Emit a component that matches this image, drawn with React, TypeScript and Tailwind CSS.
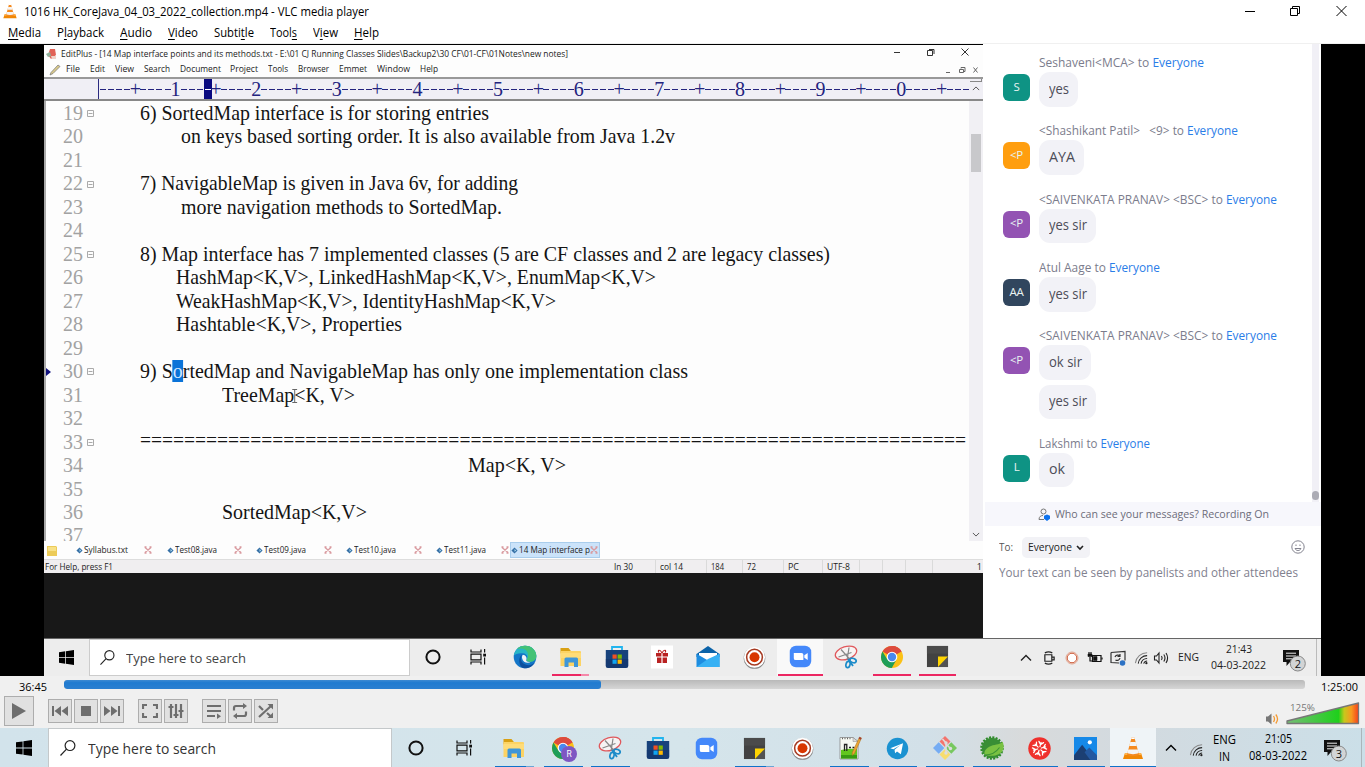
import React, { useLayoutEffect, useRef, useState } from "react";

type Kids = { children?: React.ReactNode };

/* Text condensed or widened horizontally so that it fills `w` pixels. */
function Fit({ w, className = "", children }: Kids & { w: number; className?: string }) {
  const ref = useRef<HTMLSpanElement>(null);
  const [scale, setScale] = useState(1);
  useLayoutEffect(() => {
    const el = ref.current;
    if (!el) return;
    el.style.transform = "none";
    const value = w / Math.max(1, el.getBoundingClientRect().width);
    el.style.transform = `scaleX(${value})`;
    setScale(value);
  }, [w]);
  return (
    <span className={`inline-flex shrink-0 ${className}`} style={{ width: w }}>
      <span ref={ref} className="inline-block shrink-0 origin-left whitespace-pre" style={{ transform: `scaleX(${scale})` }}>
        {children}
      </span>
    </span>
  );
}

/* ---------- icons ---------- */

const Cone = ({ className = "" }) => (
  <svg viewBox="0 0 24 24" className={className}>
    <path d="M4 17h16l2 6H2z" fill="#f08705" />
    <path d="M4 17h16l.6 2H3.4z" fill="#ffb14a" />
    <path d="M10.6 1.5h2.8L18 18.5c-2 2-10 2-12 0z" fill="#f58a1f" />
    <path d="M9.3 6h5.4l1.1 4H8.2zM7.3 13.500h9.400l1 3.500c-3 1.500-8.400 1.500-11.400 0z" fill="#f4f4f4" />
    <path d="M10.600 1.500h2.800l.4 1.500h-3.600z" fill="#fff" />
  </svg>
);

const WinLogo = ({ className = "" }) => (
  <svg viewBox="0 0 16 16" className={className}>
    <path d="M0 2.300 6.600 1.400V7.600H0zM7.400 1.300 16 0V7.600H7.400zM0 8.400H6.600V14.600L0 13.700zM7.400 8.400H16V16L7.400 14.700z" />
  </svg>
);

const Magnifier = ({ className = "" }) => (
  <svg viewBox="0 0 16 16" className={className} fill="none" stroke="#222" strokeWidth="1.2">
    <circle cx="10" cy="5.600" r="4.900" />
    <path d="M6.500 9.200.5 15.500" />
  </svg>
);

const Ring = () => (
  <svg viewBox="0 0 16 16" className="size-4">
    <circle cx="8" cy="8" r="6.600" fill="none" stroke="#111" strokeWidth="2" />
  </svg>
);

const TaskView = () => (
  <svg viewBox="0 0 17 16" className="h-4 w-[17px]" fill="none" stroke="#111" strokeWidth="1.200">
    <path d="M1 .5V3H11V.5M1 15.500V13H11V15.500M1 5.200H11V10.800H1zM14.600 0v3.500M14.600 8.500V15.500" />
    <path d="M13.200 4.700h2.800v2.800h-2.800z" fill="#111" stroke="none" />
  </svg>
);

const Folder = () => (
  <svg viewBox="0 0 24 24" className="size-6">
    <path d="M1.500 3h8l2 2.500v3h-10z" fill="#d9a013" />
    <path d="M1.500 6h19.500q1 0 1 1v14h-20.500z" fill="#fcd364" />
    <path d="M1.500 8h20.500v5h-20.500z" fill="#ffdc78" />
    <path d="M5.500 22v-8q0-1.500 1.500-1.500h10.500q1.500 0 1.500 1.500v8h-4v-4.500h-5.500V22z" fill="#3f96d8" />
  </svg>
);

const Store = () => (
  <svg viewBox="0 0 24 24" className="size-6">
    <path d="M7 6V2h10v4" fill="none" stroke="#21b4ee" strokeWidth="1.800" />
    <path d="M.8 5h22.400v15.500q0 2.500-2.500 2.500H3.300q-2.500 0-2.500-2.500z" fill="#17427c" />
    <path d="M.8 14h22.400v6.500q0 2.500-2.500 2.500H3.300q-2.500 0-2.500-2.500z" fill="#12336a" opacity=".6" />
    <path d="M7.500 9.500h4.200v4.200H7.500z" fill="#f25022" />
    <path d="M12.600 9.500h4.200v4.200h-4.200z" fill="#7fba00" />
    <path d="M7.500 14.600h4.200v4.200H7.500z" fill="#12a5f0" />
    <path d="M12.600 14.600h4.200v4.200h-4.200z" fill="#ffb901" />
  </svg>
);

const Zoom = () => (
  <svg viewBox="0 0 24 24" className="size-[23px]">
    <rect x=".8" y=".8" width="22.400" height="22.400" rx="6.500" fill="#4488fa" />
    <path d="M5 8.300h8q2 0 2 2v5.400H7q-2 0-2-2zM16 10.800l3.500-2.500v7.400L16 13.200z" fill="#fff" />
  </svg>
);

const Chrome = ({ badge = false }) => (
  <svg viewBox="0 0 24 24" className="size-6 overflow-visible">
    <circle cx="12" cy="12" r="11" fill="#fbc116" />
    <path d="M12 12 2.470 6.500A11 11 0 0 1 21.530 6.500z" fill="#dd4b3e" />
    <path d="M12 12 12 6.500H21.530A11 11 0 0 0 12 1z" fill="#dd4b3e" />
    <path d="M2.470 6.500A11 11 0 0 0 11.800 23L16.500 14.500 12 12 7.300 14.600z" fill="#1e9e58" />
    <circle cx="12" cy="12" r="5.300" fill="#fff" />
    <circle cx="12" cy="12" r="4.200" fill="#4a88ef" />
    {badge && (
      <>
        <circle cx="18" cy="18" r="8" fill="#7e57c2" />
        <text x="18" y="21" textAnchor="middle" fontSize="8.500" fill="#fff" fontFamily="Roboto, sans-serif">R</text>
      </>
    )}
  </svg>
);

const Snip = () => (
  <svg viewBox="0 0 24 24" className="size-6" fill="none">
    <ellipse cx="12" cy="8" rx="11" ry="6.300" transform="rotate(-17 12 8)" fill="#f7f3f3" stroke="#e0585c" strokeWidth="1.300" />
    <path d="m7 4.500 9.500 10.500M15 2.500l-1.800 12M4.500 12l13-4.500" stroke="#888" strokeWidth="1.200" />
    <ellipse cx="19" cy="15.500" rx="3.300" ry="2.100" transform="rotate(20 19 15.500)" stroke="#1c8bc9" strokeWidth="1.700" />
    <ellipse cx="14" cy="19.500" rx="2" ry="3.200" transform="rotate(15 14 19.500)" stroke="#1c8bc9" strokeWidth="1.700" />
    <path d="m14 14 5 7" stroke="#1c8bc9" strokeWidth="1.800" />
  </svg>
);

const Sticky = () => (
  <svg viewBox="0 0 24 24" className="size-[23px]">
    <path d="M1 1h22v22H1z" fill="#424242" />
    <path d="M1 1h22v8H1z" fill="#4b4b4b" />
    <path d="M12.500 12H23L12.500 23z" fill="#ffd400" />
    <path d="M23 12 12.500 23H23z" fill="#eee" opacity=".1" />
  </svg>
);

const Recorder = () => (
  <svg viewBox="0 0 24 24" className="size-[23px]">
    <circle cx="12" cy="12.500" r="11.300" fill="#888" />
    <circle cx="12" cy="11.700" r="11" fill="#fff" />
    <circle cx="12" cy="11.700" r="8.200" fill="none" stroke="#a63a22" strokeWidth="1.600" />
    <circle cx="12" cy="11.700" r="5.200" fill="#d83600" />
  </svg>
);

const Edge = () => (
  <svg viewBox="0 0 24 24" className="size-6">
    <circle cx="12" cy="12" r="11.300" fill="#1476c8" />
    <path d="M.9 10.500C2 4 7 .8 12 .8c7 0 11.300 5 11.300 10 0 4-3 6-6.500 6-2 0-3.800-.7-3.200-2 1.700-2.200.7-6-3.600-6.500C6 7.700 2 9 .9 10.500z" fill="#28b5c6" />
    <path d="M12 .8c7 0 11.300 5 11.300 10 0 4-3 6-6.500 6-2 0-3.800-.7-3.200-2 3-4 1-8.800-1.500-10.300C9 3 6 3.600 4 4 6.200 2 9 .8 12 .8z" fill="#43c276" />
    <path d="M10 9c-4 3-2.500 10 4 11 3 .5 5.500-.5 7.500-2.200C18.500 23 13.500 24 10 23 5.500 21 4.500 11.500 10 9z" fill="#0c4f9e" />
    <path d="M9.800 9.700c2.600.1 4.500 2.600 3.500 5-.7 1.600 1.500 2.700 4.500 2.100-2.500 2-8 1-8.700-3.500-.2-1.500 0-2.700.7-3.600z" fill="#f0f4f6" />
  </svg>
);

const Gift = () => (
  <svg viewBox="0 0 24 24" className="size-6">
    <path d="M1 .5h22v23H1z" fill="#fff" />
    <path d="M6 8h5.400v3.500H6zM12.600 8H18v3.500h-5.400zM7 12.500h4.400v5.500H7zM12.600 12.500H17v5.500h-4.400z" fill="#b92222" />
    <path d="M12 8C10 4 7 5 9 7.500M12 8c2-4 5-3 3-.5" fill="none" stroke="#b92222" strokeWidth="1.100" />
  </svg>
);

const Mail = () => (
  <svg viewBox="0 0 24 24" className="size-6">
    <path d="M.5 9 12 1l11.500 8v3H.5z" fill="#0b63a9" />
    <path d="M3 8h18v8H3z" fill="#fff" />
    <path d="M.5 8.800 12 15.500l11.500-6.700v13.200H.5z" fill="#1e8de0" />
    <path d="M.5 22 12 14l11.500-5.200v13.200z" fill="#37b1f4" />
  </svg>
);

const NotepadPP = () => (
  <svg viewBox="0 0 24 24" className="size-6">
    <path d="M2 1.500h13l5 4V23H2z" fill="#f6f8f2" stroke="#888" strokeWidth=".8" />
    <path d="M15 1.500v4h5z" fill="#ddd" stroke="#888" strokeWidth=".5" />
    <path d="M3 14q9-2 16-1v9.500H3z" fill="#62c61f" />
    <path d="M3 19h16v3.500H3z" fill="#379a12" />
    <path d="M4 2.500h10" stroke="#666" strokeDasharray="1 1.500" strokeWidth="1.500" />
    <path d="M6.500 15V8.500h2.300V15M11 11.500h2M14.500 11.500h2" stroke="#222" strokeWidth="1.300" fill="none" />
    <path d="m21.500 1 2 1-7 15.500-2.500 2 .4-3.300z" fill="#eba532" stroke="#a56a1c" strokeWidth=".5" />
    <path d="m21.500 1 2 1-.8 1.800-2-1z" fill="#a03b3b" />
  </svg>
);

const Telegram = () => (
  <svg viewBox="0 0 24 24" className="size-[23px]">
    <circle cx="12" cy="12" r="11.200" fill="#1b92d1" />
    <path d="m4.500 11.700 13.300-5.200-2.300 11.500-4-3-2 2-.6-3.700 6.200-5-7.400 4.500z" fill="#fff" />
  </svg>
);

const GitGui = () => (
  <svg viewBox="0 0 24 24" className="size-6">
    <path d="m12 0 5.500 5.500L12 11 6.500 5.500z" fill="#f4746d" />
    <path d="M5.700 6.300 11.300 12l-5.600 5.700L0 12z" fill="#75acf3" />
    <path d="M18.300 6.300 24 12l-5.700 5.700-5.600-5.700z" fill="#78c860" />
    <path d="m12 13 5.500 5.500L12 24l-5.500-5.500z" fill="#f7dd6d" />
    <path d="M9.500 3 13 7v10M13 8l4 4" stroke="#ddd" strokeWidth="1.600" fill="none" />
    <circle cx="13" cy="7" r="1.700" fill="#ddd" />
    <circle cx="17.500" cy="12.500" r="1.700" fill="#ddd" />
    <circle cx="13" cy="17" r="1.700" fill="#ddd" />
  </svg>
);

const Spring = () => (
  <svg viewBox="0 0 24 24" className="size-6">
    <circle cx="12" cy="12" r="10.500" fill="none" stroke="#2e8a2a" strokeWidth="2.500" strokeDasharray="2 1.300" />
    <circle cx="12" cy="12" r="10.300" fill="#388e35" />
    <path d="M22.500 5.500C21 8.500 16 8 11 10c-5 2-7 5-6.500 8.500C10 21 22 20.500 23.500 12c.3-2.500 0-4.500-1-6.500z" fill="#79c142" />
    <path d="M5 19c6 0 11-2.500 14.500-7.500" stroke="#3b9436" strokeWidth="1.100" fill="none" />
  </svg>
);

const RedHub = () => (
  <svg viewBox="0 0 24 24" className="size-[23px]">
    <circle cx="12" cy="12" r="11.700" fill="#ef302c" />
    {[0, 60, 120, 180, 240, 300].map((a) => (
      <path key={a} transform={`rotate(${a + 15} 12 12)`} d="M12 10V5.500M9.500 5l2.500 2.700L14.500 5" fill="none" stroke="#fff" strokeWidth="1.300" strokeLinecap="round" />
    ))}
  </svg>
);

const Photos = () => (
  <svg viewBox="0 0 24 24" className="size-[23px]">
    <path d="M0 0h24v24H0z" fill="#1689e8" />
    <path d="M0 19 8.500 8 21 24H0z" fill="#1c3f73" />
    <path d="m11 16 5-5 8 8v5h-7z" fill="#2458a0" />
    <circle cx="16.500" cy="5.500" r="2.200" fill="#fff" />
  </svg>
);

const Wifi = () => (
  <svg viewBox="0 0 16 16" className="size-[15px]" fill="none" strokeWidth="1.100">
    <path d="M1.500 14A12.500 12.500 0 0 1 14 3" stroke="#888" />
    <path d="M4.500 14.500A9.500 9.500 0 0 1 14 6M7.500 14.500A6.500 6.500 0 0 1 14 9" stroke="#222" />
    <path d="M10.300 14.500A4 4 0 0 1 14 11.800" stroke="#222" />
    <circle cx="13.200" cy="14" r="1.200" fill="#222" />
  </svg>
);

const Chevron = ({ down = false, className = "" }) => (
  <svg viewBox="0 0 12 8" className={className} fill="none" stroke="currentColor" strokeWidth="1.400">
    <path d={down ? "M1 1.500 6 6.500 11 1.500" : "M1 6.500 6 1.500 11 6.500"} />
  </svg>
);

const Notice = ({ n }: { n: number }) => (
  <svg viewBox="0 0 24 24" className="size-6 overflow-visible">
    <path d="M1 2h16v12H8l-3.500 4v-4H1z" fill="#111" />
    <path d="M4 5.200h10M4 8h10M4 10.800h7" stroke="#eee" strokeWidth="1" />
    <circle cx="15.800" cy="15.500" r="7.500" fill="#d2d4d5" stroke="#888" strokeWidth="1" />
    <text x="15.800" y="19.500" textAnchor="middle" fontSize="11" fill="#111" fontFamily="Open Sans, sans-serif">{n}</text>
  </svg>
);

/* ---------- VLC window ---------- */

const vlcMenus: [string, string, string, number][] = [
  ["", "M", "edia", 33], ["P", "l", "ayback", 47], ["", "A", "udio", 32], ["", "V", "ideo", 30],
  ["Subti", "t", "le", 40], ["Tool", "s", "", 27], ["V", "i", "ew", 25], ["", "H", "elp", 25],
];

function VlcHeader() {
  return (
    <header className="flex h-11 shrink-0 flex-col border-b border-[#f0f0f0] bg-white text-[12px] text-black">
      <div className="flex h-6 items-center">
        <Cone className="mb-[2px] ml-[2px] size-4" />
        <Fit w={345} className="ml-[6px]">1016 HK_CoreJava_04_03_2022_collection.mp4 - VLC media player</Fit>
        <svg viewBox="0 0 104 12" className="mr-[17px] mb-[2px] ml-auto h-3 w-[104px]" fill="none" stroke="#000">
          <path d="M1 6.500h10M46.500 3.500h7v7h-7zM48.500 3.500v-2h7v7h-2M92.500 1l10 10M102.500 1l-10 10" />
        </svg>
      </div>
      <nav className="flex h-5 items-center gap-4 pl-2">
        {vlcMenus.map(([a, b, c, w]) => (
          <Fit key={a + b + c} w={w}>{a}<u className="underline-offset-2">{b}</u>{c}</Fit>
        ))}
      </nav>
    </header>
  );
}

/* ---------- editor ---------- */

const editMenus: [string, number][] = [
  ["File", 14], ["Edit", 15], ["View", 19], ["Search", 26], ["Document", 41], ["Project", 28],
  ["Tools", 20], ["Browser", 31], ["Emmet", 28], ["Window", 33], ["Help", 18],
];

type Line = { n: number; fold?: boolean; x?: number; w?: number; text?: React.ReactNode; mark?: boolean; rule?: boolean };

const lines: Line[] = [
  { n: 19, fold: true, x: 0, w: 349, text: "6) SortedMap interface is for storing entries" },
  { n: 20, x: 41, w: 494, text: "on keys based sorting order. It is also available from Java 1.2v" },
  { n: 21 },
  { n: 22, fold: true, x: 0, w: 378, text: "7) NavigableMap is given in Java 6v, for adding" },
  { n: 23, x: 41, w: 321, text: "more navigation methods to SortedMap." },
  { n: 24 },
  { n: 25, fold: true, x: 0, w: 690, text: "8) Map interface has 7 implemented classes (5 are CF classes and 2 are legacy classes)" },
  { n: 26, x: 36, w: 480, text: "HashMap<K,V>, LinkedHashMap<K,V>, EnumMap<K,V>" },
  { n: 27, x: 36, w: 380, text: "WeakHashMap<K,V>, IdentityHashMap<K,V>" },
  { n: 28, x: 36, w: 226, text: "Hashtable<K,V>, Properties" },
  { n: 29 },
  { n: 30, fold: true, mark: true, x: 0, w: 548, text: <>9) S<span className="bg-[#0a73d8] text-[#cfe6ff]">o</span>rtedMap and NavigableMap has only one implementation class</> },
  { n: 31, x: 82, w: 133, text: <>TreeMap<span className="relative"><svg viewBox="0 0 7 14" className="absolute top-[5px] -left-[3px] h-[14px] w-[7px]" fill="none" stroke="#666"><path d="M1 .5h5M3.500.5v13M1 13.500h5" /></svg></span>{"<K, V>"}</> },
  { n: 32 },
  { n: 33, fold: true, rule: true, x: 0, w: 826, text: "=".repeat(75) },
  { n: 34, x: 328, w: 98, text: "Map<K, V>" },
  { n: 35 },
  { n: 36, x: 82, w: 145, text: "SortedMap<K,V>" },
  { n: 37 },
];

const rulerCells = Array.from({ length: 108 }, (_, i) =>
  i % 10 === 9 ? String(((i + 1) / 10) % 10) : i % 10 === 4 ? "+" : "-",
);

function Ruler() {
  return (
    <div className="flex h-6 shrink-0 border-y-2 border-t-[#999] border-b-[#888] bg-[#f0eff5]">
      <div className="w-[55px] shrink-0 border-r border-[#2a2a80]" />
      <div className="flex flex-1 items-center font-['Liberation_Serif',serif] text-[20px] leading-5 text-[#23237e]">
        {rulerCells.map((c, i) => (
          <span key={i} className={`flex h-5 w-[8.070px] shrink-0 justify-center ${i === 13 ? "bg-[#0a0a80] text-white" : ""}`}>
            {c === "-" ? <i className="mt-[10px] h-px w-[6px] bg-current" /> : c}
          </span>
        ))}
      </div>
      <div className="flex w-[14px] flex-col items-center gap-1">
        <i className="h-[3px] w-3 border-r border-b border-[#888]" />
        <Chevron className="h-[5px] w-2 text-[#444]" />
      </div>
    </div>
  );
}

const Gem = () => (
  <svg viewBox="0 0 8 8" className="size-[7px] shrink-0">
    <path d="m4 .5 3.500 3.500L4 7.500.5 4z" fill="#356fa5" />
    <path d="m4 2.300 2 1.700-2 1.500z" fill="#a9d8ee" />
  </svg>
);
const TabX = () => (
  <svg viewBox="0 0 8 8" className="size-[8px] shrink-0" fill="none" stroke="#d99a9f" strokeWidth="1.300">
    <path d="m1 1.500 6 5M7 1.500l-6 5M.5 1h2M5.500 1h2M.5 7h2M5.500 7h2" />
  </svg>
);

const fileTabs: [string, number][] = [
  ["Syllabus.txt", 44], ["Test08.java", 42], ["Test09.java", 42], ["Test10.java", 42], ["Test11.java", 42],
];

const statusCells: [string, number, string][] = [
  ["In 30", 19, "w-[46px]"], ["col 14", 23, "w-[51px]"], ["184", 13, "w-[36px]"], ["72", 9, "w-[41px]"],
  ["PC", 11, "w-[39px]"], ["UTF-8", 23, "w-[37px]"], ["", 0, "w-[23px]"], ["", 0, "w-[23px]"], ["", 0, "w-[27px]"],
];

function Indent({ x }: { x: number }) {
  return <span className="shrink-0" style={{ width: x }} />;
}

function Editor() {
  return (
    <section className="flex w-[939px] shrink-0 flex-col border-t border-black bg-[#181818]">
      <div className="flex h-[528px] flex-col bg-[#fdfdfd] text-[9.500px] text-[#222]">
        <div className="flex h-[17px] shrink-0 items-center">
          <svg viewBox="0 0 12 12" className="ml-[1px] size-3">
            <path d="M5 1h5l1 6-5 4-3-4z" fill="#e16257" />
            <path d="M1 6l4-2 1 4-3 1z" fill="#8fb09a" />
            <path d="M6 8h5v3H7z" fill="#efd2c8" />
          </svg>
          <Fit w={507} className="mt-[1px] ml-1">EditPlus - [14 Map interface points and its methods.txt - E:\01 CJ Running Classes Slides\Backup2\30 CF\01-CF\01Notes\new notes]</Fit>
          <svg viewBox="0 0 80 10" className="mr-[13px] mb-1 ml-auto h-[10px] w-20" fill="none" stroke="#333">
            <path d="M4 5.500h6M37.500 3.500h5v5h-5zM39 2.500h5V7M71.500 1.500l7 7M78.500 1.500l-7 7" />
          </svg>
        </div>
        <div className="flex h-[15px] shrink-0 items-center">
          <svg viewBox="0 0 12 12" className="mr-[5px] ml-[5px] size-3">
            <path d="M1 11 2 8.500 9 1l2 1.500L4 9.500z" fill="#d9c98a" stroke="#777" strokeWidth=".7" />
          </svg>
          <nav className="flex items-center gap-[9.900px]">
            {editMenus.map(([t, w]) => <Fit key={t} w={w}>{t}</Fit>)}
          </nav>
          <svg viewBox="0 0 36 8" className="mr-[2px] ml-auto h-2 w-9" fill="none" stroke="#666">
            <path d="M1 6.500h4M14.500 3.500h4v3h-4zM16 2.500v-1h4v4h-1M28.500 1.500l4 5M32.500 1.500l-4 5" />
          </svg>
        </div>
        <Ruler />
        <div className="flex h-[440px] shrink-0 border-l-2 border-[#aaa]">
          <div className="flex-1 overflow-hidden pt-[1px] font-['Liberation_Serif',serif] text-[20.400px] text-[#141414]">
            {lines.map((l) => (
              <div key={l.n} className="flex h-[23.480px] items-center leading-[23.480px]">
                <span className="flex w-[17px] shrink-0">
                  {l.mark && <svg viewBox="0 0 5 8" className="h-2 w-[5px]"><path d="M0 0l5 4-5 4z" fill="#12127e" /></svg>}
                </span>
                <Fit w={20} className="text-[#a2a2a2]">{l.n}</Fit>
                <span className="flex w-[56.500px] shrink-0 pl-1">
                  {l.fold && (
                    <svg viewBox="0 0 7 7" className="size-[7px]" fill="none" stroke="#aaa"><path d="M.5.5h6v6h-6zM1.500 3.500h4" /></svg>
                  )}
                </span>
                {l.text && (
                  <>
                    <Indent x={l.x || 0} />
                    <Fit w={l.w || 0} className={l.rule ? "pb-[3px]" : ""}>{l.text}</Fit>
                  </>
                )}
              </div>
            ))}
          </div>
          <div className="flex w-[14px] flex-col items-center bg-[#f1f0f4]">
            <i className="mt-[33px] h-[38px] w-[10px] bg-[#c8c8cb]" />
            <Chevron down className="mt-auto mb-1 h-[5px] w-2 text-[#444]" />
          </div>
        </div>
        <div className="flex h-[18px] shrink-0 items-center">
          <svg viewBox="0 0 11 11" className="mr-[18px] ml-[3px] size-[11px]"><path d="M0 1h9l1 1v9H0z" fill="#eccb58" /><path d="M1 2h8v4H1z" fill="#f8e187" /></svg>
          {fileTabs.map(([t, w], i) => (
            <span key={t} className={`flex shrink-0 items-center ${i === 4 ? "w-[76px]" : i === 0 ? "w-[90.500px]" : "w-[89.700px]"}`}>
              <Gem />
              <Fit w={w} className="ml-[1px] text-[9px]">{t}</Fit>
              <span className="flex flex-1 justify-end"><span className={i === 4 ? "pr-[3px]" : i === 0 ? "pr-[15px]" : "pr-[14px]"}><TabX /></span></span>
            </span>
          ))}
          <span className="-ml-[2px] flex h-4 w-[90px] items-center border border-[#a9cdec] bg-[#cbe3fa]">
            <Gem />
            <Fit w={71} className="ml-[1px] text-[9px]">14 Map interface p</Fit>
            <TabX />
          </span>
        </div>
        <div className="flex h-[14px] shrink-0 items-center border-t border-[#ddd] bg-[#f0eef0] text-[9px]">
          <Fit w={68} className="ml-[1px]">For Help, press F1</Fit>
          <div className="ml-auto flex">
            {statusCells.map(([t, w, cell], i) => (
              <span key={i} className={`flex h-[13px] items-center border-r border-[#dadada] pl-1 ${cell}`}>{t && <Fit w={w}>{t}</Fit>}</span>
            ))}
            <span className="flex w-[50px] items-center justify-end pr-[1px]">1</span>
          </div>
        </div>
      </div>
    </section>
  );
}

/* ---------- chat ---------- */

type Msg = { from: string; w: number; initials: string; color: string; body: [string, number][]; gap: string };

const messages: Msg[] = [
  { from: "Seshaveni<MCA>", w: 165, initials: "S", color: "bg-[#0e9384]", body: [["yes", 20]], gap: "h-[68px]" },
  { from: "<Shashikant Patil>   <9>", w: 199, initials: "<P", color: "bg-[#ff9e0f]", body: [["AYA", 26]], gap: "h-[68.500px]" },
  { from: "<SAIVENKATA PRANAV> <BSC>", w: 238, initials: "<P", color: "bg-[#9353b3]", body: [["yes sir", 38]], gap: "h-[68.500px]" },
  { from: "Atul Aage", w: 121, initials: "AA", color: "bg-[#31465e]", body: [["yes sir", 38]], gap: "h-[68px]" },
  { from: "<SAIVENKATA PRANAV> <BSC>", w: 238, initials: "<P", color: "bg-[#9353b3]", body: [["ok sir", 33], ["yes sir", 38]], gap: "h-[107.500px]" },
  { from: "Lakshmi", w: 111, initials: "L", color: "bg-[#0e9384]", body: [["ok", 16]], gap: "h-[60px]" },
];

function Chat() {
  return (
    <aside className="flex flex-1 flex-col bg-white">
      <div className="flex h-[458px] shrink-0">
        <div className="flex-1 pt-[11px] pl-[20px]">
          {messages.map((m, i) => (
            <div key={i} className={`flex ${m.gap}`}>
              <span className={`mt-[19px] flex size-[27px] shrink-0 items-center justify-center rounded-[6px] pb-[2px] text-[11.500px] tracking-tight text-[#e8f4f2] ${m.color}`}>{m.initials}</span>
              <div className="ml-[9px] flex flex-col items-start">
                <div className="flex h-[14px] items-center pt-[2px] text-[12px] text-[#7b7c8c]">
                  <Fit w={m.w}>{m.from} to <span className="text-[#2a7de8]">Everyone</span></Fit>
                </div>
                <div className="mt-[3px] flex flex-col items-start gap-[5px]">
                  {m.body.map(([t, w]) => (
                    <span key={t} className="flex h-[34.500px] items-center rounded-[11px] bg-[#f2f2f7] px-[9.500px] pb-[2px] text-[14px] text-[#4d4d58]"><Fit w={w}>{t}</Fit></span>
                  ))}
                </div>
              </div>
            </div>
          ))}
        </div>
        <div className="mr-[2px] flex w-[7px] flex-col justify-end bg-[#f1f0f6]">
          <i className="mb-[2px] h-[9px] w-[7px] rounded-full bg-[#acacb5]" />
        </div>
      </div>
      <div className="ml-[2px] flex h-6 shrink-0 items-center bg-[#f7f7fc] pl-[53px] text-[11.500px] text-[#6c6c7a]">
        <svg viewBox="0 0 13 13" className="mr-1 size-[13px]" fill="none">
          <circle cx="5.500" cy="3.500" r="2.500" stroke="#777" />
          <path d="M6 11.500H1c0-3 2-4 4-4" stroke="#777" />
          <path d="m9 6.500 3 1.200v3L9 13l-3-2.300v-3z" fill="#0e72ed" />
        </svg>
        <Fit w={214}>Who can see your messages? Recording On</Fit>
      </div>
      <div className="mt-[11px] flex h-[21px] items-center pl-4 text-[11px] text-[#555]">
        <Fit w={14}>To:</Fit>
        <span className="ml-[9px] flex h-[21px] w-[68px] items-center rounded-[5px] bg-[#f2f2f6] pl-[6px] text-[#222]">
          <Fit w={44}>Everyone</Fit>
          <svg viewBox="0 0 8 6" className="ml-1 h-[6px] w-2" fill="none" stroke="#222" strokeWidth="1.600"><path d="m1 1 3 3 3-3" /></svg>
        </span>
        <svg viewBox="0 0 14 14" className="mr-4 mb-[2px] ml-auto size-[14px]" fill="none" stroke="#83838f">
          <circle cx="7" cy="7" r="6.200" />
          <path d="M4 8.500c1 2.700 5 2.700 6 0z" />
          <path d="M5 4.500v1.500M9 4.500v1.500" />
        </svg>
      </div>
      <div className="mt-[7px] flex h-4 items-center pl-4 text-[12px] text-[#81818f]">
        <Fit w={299}>Your text can be seen by panelists and other attendees</Fit>
      </div>
    </aside>
  );
}

/* ---------- taskbars ---------- */

function Slot({ w = "w-[45.900px]", line = "", active = "", children }: Kids & { w?: string; line?: string; active?: string }) {
  return (
    <span className={`flex h-full shrink-0 flex-col items-center ${w} ${active}`}>
      <span className="flex flex-1 items-center">{children}</span>
      <i className={line || "h-px"} />
    </span>
  );
}

function SharedTaskbar() {
  return (
    <div className="flex h-[38px] shrink-0 border-t border-[#666] bg-[#ededed]">
      <div className="flex w-[45px] shrink-0 items-center pl-[15px]"><WinLogo className="size-[15px]" /></div>
      <div className="flex w-[321px] shrink-0 items-center border border-[#ccc] bg-white pt-[1px] text-[13.500px] text-[#444]">
        <Magnifier className="mr-[11px] mb-[2px] ml-[10px] size-[15px]" />
        <Fit w={120}>Type here to search</Fit>
      </div>
      <Slot><Ring /></Slot>
      <Slot><TaskView /></Slot>
      <Slot><Edge /></Slot>
      <Slot line="h-[2px] w-[37px] bg-[linear-gradient(90deg,#ec2762_78%,#f588a9_78%)]"><Folder /></Slot>
      <Slot><Store /></Slot>
      <Slot><Gift /></Slot>
      <Slot><Mail /></Slot>
      <Slot><Recorder /></Slot>
      <Slot active="bg-[#f9f9f9]" line="h-[2px] w-[45px] bg-[#ec2762]"><Zoom /></Slot>
      <Slot><Snip /></Slot>
      <Slot line="h-[2px] w-[38px] bg-[#ec2762]"><Chrome /></Slot>
      <Slot line="h-[2px] w-[37px] bg-[#ec2762]"><Sticky /></Slot>
      <div className="ml-auto flex items-center text-[11px] text-[#222]">
        <Chevron className="mr-[11px] h-2 w-3" />
        <svg viewBox="0 0 14 16" className="mr-[9px] h-4 w-[13px]" fill="none" stroke="#222" strokeWidth="1.300">
          <path d="M2 4.500h7.500v7H2zM9.500 7h2.500v3H9.500M2 2.500q4-2 8 0M2 13.500q4 2 8 0" />
        </svg>
        <svg viewBox="0 0 14 14" className="mr-2 size-[14px]" fill="#fff"><circle cx="7" cy="7" r="6" stroke="#e0a590" strokeWidth="1" /><circle cx="7" cy="7" r="4.800" stroke="#c9532f" strokeWidth="1" /></svg>
        <svg viewBox="0 0 16 14" className="mr-[7px] h-[14px] w-4" fill="none" stroke="#111" strokeWidth="1.200">
          <path d="M5.500 4.500h8.500v6H5.500z" /><path d="M6.500 5.500h3.500v4H6.500zM1 3h4v2.500H1z" fill="#111" strokeWidth=".6" /><path d="M2 1v2M4 1v2M3 6v4h2M15 6.500v2" />
        </svg>
        <svg viewBox="0 0 16 16" className="mr-2 size-4" fill="none" stroke="#333" strokeWidth="1.200">
          <path d="M1 2.500 15 1.500v9M1 2.500v10l8 .5M5 7a3 3 0 0 1 5-1M10 4v2.500H7.500M10 8a3 3 0 0 1-4.500 2" /><circle cx="12.500" cy="13" r="2.800" fill="#2d72c4" stroke="none" />
        </svg>
        <Wifi />
        <svg viewBox="0 0 16 14" className="mr-2 ml-1 h-[14px] w-[17px]" fill="none" stroke="#222" strokeWidth="1.100">
          <path d="M1 5v4h2l2.500 3V2L3 5zM8 5q1.300 2 0 4M10.300 3.500q2.400 3.500 0 7M12.500 2q3.200 5 0 10" />
        </svg>
        <Fit w={21}>ENG</Fit>
        <div className="ml-3 flex w-[55px] flex-col items-center pb-[2px] leading-[16px]">
          <Fit w={26}>21:43</Fit>
          <Fit w={55}>04-03-2022</Fit>
        </div>
        <span className="mr-[10px] ml-4 pt-1"><Notice n={2} /></span>
        <i className="mr-1 h-[37px] w-px bg-[#bbb]" />
      </div>
    </div>
  );
}

function HostTaskbar() {
  return (
    <div className="flex h-[39px] shrink-0 bg-[linear-gradient(90deg,#d2e3eb_0%,#d5e5eb_50%,#d2e0e8_68%,#d8dadb_75%,#d3dadf_82%,#cbdfe8_100%)]">
      <div className="flex w-[48px] shrink-0 items-center pl-4"><WinLogo className="size-4" /></div>
      <div className="flex w-[344px] shrink-0 items-center border border-b-0 border-[#c4c8ca] bg-white pt-[1px] text-[14px] text-[#333]">
        <Magnifier className="mr-3 mb-[2px] ml-[11px] size-4" />
        <Fit w={128}>Type here to search</Fit>
      </div>
      <Slot w="w-[48px] pt-[2px]"><Ring /></Slot>
      <Slot w="w-[48px] pt-[1px]"><TaskView /></Slot>
      <Slot w="w-[52px] pt-[2px]" line="h-px w-[39px] bg-[linear-gradient(90deg,#0f72c9_80%,#6ba6d6_80%)]"><Folder /></Slot>
      <Slot w="w-[46px] pt-[2px]" line="h-px w-[39px] bg-[#0f72c9]"><Chrome badge /></Slot>
      <Slot w="w-[48px] pt-[2px]" line="h-px w-[39px] bg-[#0f72c9]"><Snip /></Slot>
      <Slot w="w-[47px] pt-[2px]"><Store /></Slot>
      <Slot w="w-[50px] pt-[2px]"><Zoom /></Slot>
      <Slot w="w-[46px] pt-[2px]" line="h-px w-[39px] bg-[linear-gradient(90deg,#0f72c9_80%,#6ba6d6_80%)]"><Sticky /></Slot>
      <Slot w="w-[50px] pt-[2px]"><Recorder /></Slot>
      <Slot w="w-[45px] pt-[2px]" line="h-px w-[39px] bg-[#0f72c9]"><NotepadPP /></Slot>
      <Slot w="w-[51px] pt-[2px]" line="h-px w-[38px] bg-[#0f72c9]"><Telegram /></Slot>
      <Slot w="w-[44px] pt-[2px]" line="h-px w-[38px] bg-[#0f72c9]"><GitGui /></Slot>
      <Slot w="w-[50px] pt-[2px]" line="h-px w-[38px] bg-[#0f72c9]"><Spring /></Slot>
      <Slot w="w-[44px] pt-[2px]" line="h-px w-[38px] bg-[#0f72c9]"><RedHub /></Slot>
      <Slot w="w-[49px] pt-[2px]" line="h-px w-[38px] bg-[#0f72c9]"><Photos /></Slot>
      <Slot w="w-[46px] pt-[2px]" active="bg-[#eff4f7]" line="h-px w-[46px] bg-[#0f72c9]"><Cone className="size-6" /></Slot>
      <div className="flex flex-1 items-center text-[12px] text-black">
        <Chevron className="ml-[9px] h-2 w-3" />
        <span className="ml-[12px] pt-1"><Wifi /></span>
        <div className="ml-[9px] flex w-[23px] flex-col items-center leading-[17px]"><Fit w={23}>ENG</Fit><Fit w={11}>IN</Fit></div>
        <div className="ml-[13px] flex w-[58px] flex-col items-center pb-[1px] leading-[17px]"><Fit w={27}>21:05</Fit><Fit w={58}>08-03-2022</Fit></div>
        <span className="ml-[16px] pt-1"><Notice n={3} /></span>
        <i className="mr-[3px] ml-auto h-full w-px bg-[#aab6bb]" />
      </div>
    </div>
  );
}

/* ---------- player controls ---------- */

const Btn = ({ children, className = "" }: Kids & { className?: string }) => (
  <button className={`flex size-6 shrink-0 items-center justify-center border border-[#adadad] bg-[#e1e1e1] ${className}`}>
    <svg viewBox="0 0 16 16" className="size-4" fill="#6e6e6e" stroke="#6e6e6e" strokeWidth="0">{children}</svg>
  </button>
);

function Controls() {
  return (
    <div className="flex h-[52px] shrink-0 flex-col bg-[#f0f0f0] text-[11px] text-black">
      <div className="flex h-[19px] items-center">
        <Fit w={28} className="ml-[19px] pt-[2px] leading-none">36:45</Fit>
        <div className="mr-4 -mt-[2px] ml-[17px] flex h-[9px] w-[1241px] shrink-0 overflow-hidden rounded-[3px] bg-[linear-gradient(180deg,#b9b9b9,#d6d6d6)]">
          <i className="h-full w-[537px] rounded-[3px] bg-[linear-gradient(180deg,#3e8ad2,#217bd0_30%,#2b7fd0)]" />
        </div>
        <Fit w={37} className="pt-[2px] leading-none">1:25:00</Fit>
      </div>
      <div className="flex h-[32px] items-center pl-1">
        <button className="flex size-[30px] shrink-0 items-center justify-center border border-[#adadad] bg-[#e1e1e1]">
          <svg viewBox="0 0 16 16" className="size-4"><path d="M1 0v16l14-8z" fill="#6e6e6e" /></svg>
        </button>
        <Btn className="ml-[14px]"><path d="M0 3h2v10H0zM9 3v10L2.500 8zM16 3v10L9.500 8z" /></Btn>
        <Btn className="ml-[2px]"><path d="M3 3h10v10H3z" /></Btn>
        <Btn className="ml-[2px]"><path d="M14 3h2v10h-2zM7 3v10l6.500-5zM0 3v10l6.500-5z" /></Btn>
        <Btn className="ml-[14px]"><path fill="none" strokeWidth="2.200" d="M1 6V2h4M11 2h4v4M15 10v4h-4M5 14H1v-4" /></Btn>
        <Btn className="ml-[2px]"><path strokeWidth="2.200" fill="none" d="M3 1v14M8 1v14M13 1v14M.5 4h5M5.500 12h5M10.500 8h5" /></Btn>
        <Btn className="ml-[14px]"><path strokeWidth="2.200" d="M1 3h14M1 8h14M1 13h8" /><path d="M11 10.500v5.500l4-2.700z" /></Btn>
        <Btn className="ml-[2px]"><path strokeWidth="2.200" fill="none" d="M2 7.500V5q0-2 2-2h8M14 8.500V11q0 2-2 2H4" /><path d="M11 0v6l4-3zM5 10v6l-4-3z" /></Btn>
        <Btn className="ml-[2px]"><path strokeWidth="2.200" fill="none" d="m1 3 4 4M9 10l4 3.500M1 14 13 3" /><path d="M9.500 1H15v5.500zM9.500 15H15V9.500z" /></Btn>
        <svg viewBox="0 0 15 14" className="mt-4 ml-auto h-[14px] w-[15px]" fill="none">
          <path d="M1 4.500h2L6.500 1.500v11L3 9.500H1z" fill="#777" />
          <path d="M8.500 4q2 3 0 6M10.800 2.500q3.500 4.500 0 9" stroke="#f39a32" strokeWidth="1.300" />
        </svg>
        <div className="mt-1 mr-[5px] ml-[6px] grid h-6 w-[74px]">
          <svg viewBox="0 0 74 24" className="col-start-1 row-start-1 h-6 w-[74px]">
            <defs>
              <linearGradient id="vol"><stop offset="0" stopColor="#76bd76" /><stop offset=".72" stopColor="#1fd01c" /><stop offset=".8" stopColor="#c7c81c" /><stop offset=".9" stopColor="#f79a20" /><stop offset="1" stopColor="#f6401c" /></linearGradient>
            </defs>
            <path d="M1 22.500V20L72.500 2v20.500z" fill="url(#vol)" stroke="#777" strokeWidth="1.300" strokeLinejoin="round" />
          </svg>
          <span className="col-start-1 row-start-1 pl-1 text-[9.500px] leading-[14px] text-[#777]"><Fit w={25}>125%</Fit></span>
        </div>
      </div>
    </div>
  );
}

export default function App() {
  return (
    <div className="flex h-[767px] w-[1365px] flex-col overflow-hidden bg-white font-['Open_Sans','Noto_Sans',sans-serif]">
      <VlcHeader />
      <main className="flex h-[632px] shrink-0 justify-center bg-black">
        <div className="flex w-[1277px] flex-col">
          <div className="flex h-[594px] shrink-0">
            <Editor />
            <Chat />
          </div>
          <SharedTaskbar />
        </div>
      </main>
      <Controls />
      <HostTaskbar />
    </div>
  );
}
